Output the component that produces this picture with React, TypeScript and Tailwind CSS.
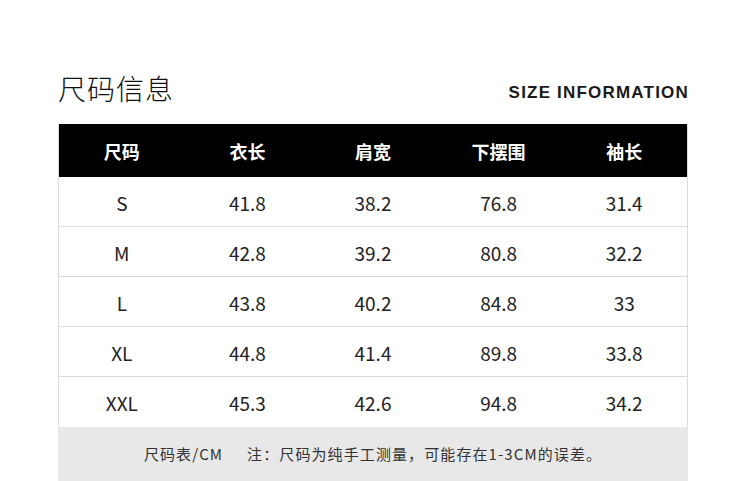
import React from "react";

const cjk = { fontFamily: '"Noto Sans CJK SC", "Noto Sans", sans-serif' };

const headers = ["尺码", "衣长", "肩宽", "下摆围", "袖长"];
const rows = [
  ["S", "41.8", "38.2", "76.8", "31.4"],
  ["M", "42.8", "39.2", "80.8", "32.2"],
  ["L", "43.8", "40.2", "84.8", "33"],
  ["XL", "44.8", "41.4", "89.8", "33.8"],
  ["XXL", "45.3", "42.6", "94.8", "34.2"],
];

export default function App() {
  return (
    <div className="w-[750px] h-[481px] bg-white overflow-hidden" style={cjk}>
      <div className="ml-[58px] w-[630px] pt-[64px]">
        <div className="flex items-end justify-between h-[44px]">
          <div className="text-[28px] leading-[40px] text-[#111] font-light tracking-[1px]">尺码信息</div>
          <div
            className="text-[17px] leading-[20px] font-bold text-[#1a1a1a] mb-[5px] tracking-[1.2px] -mr-[1px]"
            style={{ fontFamily: '"Liberation Sans", Arial, sans-serif' }}
          >
            SIZE INFORMATION
          </div>
        </div>
        <div className="mt-[16px] border-l border-r border-[#dcdcdc]">
          <div className="grid grid-cols-5 h-[53px] bg-black items-center">
            {headers.map((h) => (
              <div key={h} className="text-center text-white text-[18px] font-bold leading-none">
                {h}
              </div>
            ))}
          </div>
          {rows.map((r, i) => (
            <div
              key={i}
              className={`grid grid-cols-5 h-[50px] items-center ${i < rows.length - 1 ? "border-b border-[#dcdcdc]" : ""}`}
            >
              {r.map((c, j) => (
                <div key={j} className="text-center text-[19px] text-[#222] leading-none pt-[1px]">
                  {c}
                </div>
              ))}
            </div>
          ))}
        </div>
        <div className="bg-[#e8e8e8] h-[54px] flex items-center justify-center text-[15px] text-[#333] tracking-[1.1px]">
          <span>尺码表/CM</span>
          <span className="ml-[24px]">注：尺码为纯手工测量，可能存在1-3CM的误差。</span>
        </div>
      </div>
    </div>
  );
}
